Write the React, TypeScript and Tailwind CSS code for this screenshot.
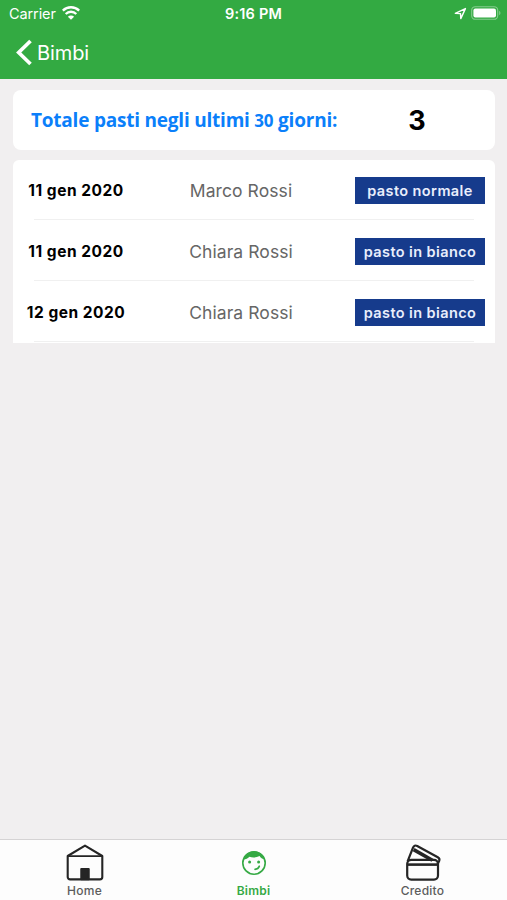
import type { ReactNode } from "react";

const meals = [
  { date: "11 gen 2020", name: "Marco Rossi", meal: "pasto normale" },
  { date: "11 gen 2020", name: "Chiara Rossi", meal: "pasto in bianco" },
  { date: "12 gen 2020", name: "Chiara Rossi", meal: "pasto in bianco" },
];

const StatusBar = () => (
  <div className="grid h-7 grid-cols-3 items-center pl-[9px] pr-[6px] text-white">
    <div className="flex items-center gap-[6px]">
      <span className="text-[14.5px] leading-5 tracking-[-0.1px]">Carrier</span>
      <svg width="18" height="14" viewBox="0 0 18 14" fill="none" className="-mt-[2px]">
        <path d="M0.8 4.6a11.8 11.8 0 0 1 16.4 0" stroke="white" strokeWidth="2.5" />
        <path d="M3.7 8a7.4 7.4 0 0 1 10.6 0" stroke="white" strokeWidth="2.3" />
        <path d="M9 13.8 5.9 10.7a4.3 4.3 0 0 1 6.2 0Z" fill="white" />
      </svg>
    </div>
    <span className="pr-[3px] text-center text-[14.5px] font-semibold leading-5 tracking-[0.2px]">
      9:16 PM
    </span>
    <div className="flex items-center justify-end gap-[4px] pb-[2px]">
      <svg width="13" height="13" viewBox="0 0 13 13" fill="none">
        <path
          d="M1.3 6.4 11.4 1.6 6.8 11.6 6.5 6.6Z"
          stroke="white"
          strokeWidth="1.4"
          strokeLinejoin="round"
        />
      </svg>
      <svg width="30" height="14" viewBox="0 0 30 14" fill="none">
        <rect x="0.7" y="0.7" width="26" height="12.6" rx="3.6" stroke="#85cc8e" strokeWidth="1.1" />
        <rect x="2.4" y="2.4" width="22.6" height="9.2" rx="2" fill="white" />
        <path d="M28.2 4.8c1.7.7 1.7 3.7 0 4.4Z" fill="#85cc8e" />
      </svg>
    </div>
  </div>
);

const TabItem = ({
  label,
  active,
  children,
}: {
  label: string;
  active?: boolean;
  children: ReactNode;
}) => (
  <div
    className={`flex flex-1 flex-col items-center pt-[3px] ${
      active ? "font-semibold text-[#35a944]" : "font-medium text-[#5c5c5c]"
    }`}
  >
    <div className="flex h-10 items-center justify-center">{children}</div>
    <span className="text-[12px] leading-4 tracking-[0.25px]">{label}</span>
  </div>
);

const HomeIcon = () => (
  <svg width="38" height="38" viewBox="0 0 38 38" fill="none" stroke="#252525" strokeWidth="2.1" strokeLinejoin="round">
    <path d="M1.7 12 19 1.6 36.3 12v21a2.4 2.4 0 0 1-2.4 2.4H4.1A2.4 2.4 0 0 1 1.7 33Z" />
    <path d="M2 12.2h34" strokeWidth="1.8" />
    <path d="M15.3 25h7.4v10.2h-7.4Z" fill="#252525" />
  </svg>
);

const FaceIcon = () => (
  <svg width="26" height="26" viewBox="0 0 26 26" fill="none">
    <circle cx="13" cy="13" r="11.2" stroke="#35a944" strokeWidth="1.6" />
    <path
      d="M2.4 9.7C4.2 4 8.2 1.3 13 1.3S22 4.1 23.7 9.7C21.4 8.9 19.5 7.5 18.6 5.9 15.2 7.7 11.3 7.9 8.5 6.7 7 8.2 4.8 9.3 2.4 9.7Z"
      fill="#35a944"
    />
    <circle cx="8.6" cy="12" r="1.5" fill="#35a944" />
    <circle cx="17.6" cy="12" r="1.5" fill="#35a944" />
    <path d="M14 19.3c2.2-.1 3.6-1.1 4.3-3.1" stroke="#35a944" strokeWidth="1.7" strokeLinecap="round" />
  </svg>
);

const CardsIcon = () => (
  <svg width="38" height="38" viewBox="0 0 38 38" fill="none" stroke="#252525" strokeWidth="2.2" strokeLinejoin="round">
    <rect x="3.2" y="15.8" width="30.8" height="19.8" rx="4" />
    <path d="M3.4 20.6h30.4" strokeWidth="2.6" />
    <path d="M3.6 17.4 9 3.6c.8-2 2.4-2.6 4.2-1.6l20.6 11.3c1.6.9 2 2 1.4 3.6l-1.6 3.4" />
    <path d="m9.6 5.6 18.8 10.6" strokeWidth="3.6" />
  </svg>
);

export default function App() {
  return (
    <div className="flex h-[900px] w-[507px] flex-col overflow-hidden bg-[#f1eff0] font-['Inter',sans-serif]">
      <header className="h-[79px] shrink-0 bg-[#33aa42]">
        <StatusBar />
        <div className="flex h-[49px] items-center gap-1 pl-4 text-white">
          <svg width="17" height="27" viewBox="0 0 17 27" fill="none">
            <path d="M14.5 2 2.7 13.5 14.5 25" stroke="white" strokeWidth="3.7" />
          </svg>
          <span className="text-[20px] leading-6 tracking-[-0.1px]">Bimbi</span>
        </div>
      </header>

      <main className="flex flex-1 flex-col gap-[10px] pl-[13px] pr-[12px] pt-[11px]">
        <section className="flex h-[60px] items-center rounded-lg bg-white pl-[18px]">
          <h1 className="w-[308px] whitespace-nowrap font-['Open_Sans',sans-serif] text-[19px] font-bold leading-7 tracking-[-0.22px] text-[#0b7ffa]">
            Totale pasti negli ultimi <span className="text-[17px]">30</span>{" "}
            giorni:
          </h1>
          <span className="flex-1 pt-[2px] text-center text-[27px] font-bold leading-8 text-black">
            3
          </span>
        </section>

        <ul className="rounded-t-md bg-white pb-px">
          {meals.map((item, index) => (
            <li key={index} className={index === 0 ? "h-[60px]" : "h-[61px]"}>
              <div
                className={`flex items-center pr-[10px] ${
                  index === 0 ? "h-[59px] pt-[2px]" : "h-[60px] pt-[3px]"
                }`}
              >
                <span className="w-[126px] text-center text-[15.5px] font-bold leading-5 tracking-[0.5px] text-black">
                  {item.date}
                </span>
                <span className="w-[204px] text-center text-[17.5px] leading-6 tracking-[0.08px] text-[#666]">
                  {item.name}
                </span>
                <span className="ml-auto flex h-[27px] w-[130px] items-center justify-center bg-[#163b8c] text-[14.5px] font-semibold leading-5 tracking-[0.4px] text-[#e9eefc]">
                  {item.meal}
                </span>
              </div>
              <div className="ml-[21px] mr-[21px] h-px bg-[#f0f0f0]" />
            </li>
          ))}
        </ul>
      </main>

      <nav className="flex h-[61px] shrink-0 border-t border-[#d5d3d4] bg-[#fdfdfd]">
        <TabItem label="Home">
          <HomeIcon />
        </TabItem>
        <TabItem label="Bimbi" active>
          <FaceIcon />
        </TabItem>
        <TabItem label="Credito">
          <CardsIcon />
        </TabItem>
      </nav>
    </div>
  );
}
